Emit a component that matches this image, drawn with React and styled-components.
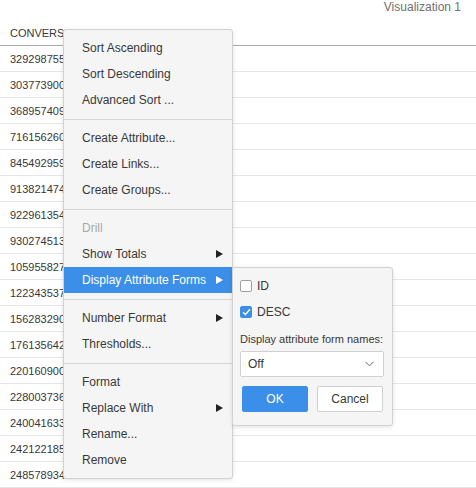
import React from "react";
import styled, { createGlobalStyle } from "styled-components";

const Global = createGlobalStyle`
  html, body { margin: 0; padding: 0; background: #fff; }
  body { font-family: "Liberation Sans", Arial, sans-serif; font-size: 12px; color: #383838; }
  * { box-sizing: border-box; }
`;

const Page = styled.div`
  position: relative;
  width: 476px;
  height: 488px;
  overflow: hidden;
  background: #fff;
`;

const TitleBar = styled.div`
  height: 20px;
  padding: 0 15px 0 0;
  display: flex;
  justify-content: flex-end;
  align-items: flex-start;
  line-height: 14px;
  color: #707070;
  font-size: 12px;
`;

const Table = styled.div`
  display: flex;
  flex-direction: column;
  font-size: 11px;
`;

const HeaderRow = styled.div`
  height: 26px;
  padding: 1px 10px 0;
  display: flex;
  align-items: center;
  border-bottom: 1px solid #a8a8a8;
  color: #383838;
`;

const Row = styled.div`
  height: 26px;
  padding: 0 10px;
  display: flex;
  align-items: center;
  border-bottom: 1px solid #e6e6e6;
  color: #383838;
`;

const Menu = styled.div`
  position: absolute;
  left: 63px;
  top: 29px;
  width: 170px;
  padding: 5px 0 5px;
  background: #f5f5f5;
  border: 1px solid #d2d2d2;
  border-radius: 3px;
  box-shadow: 0 1px 4px rgba(0, 0, 0, 0.12);
  display: flex;
  flex-direction: column;
`;

const Item = styled.div`
  height: 26px;
  padding: 0 9px 0 18px;
  display: flex;
  align-items: center;
  justify-content: space-between;
  color: ${(p) => (p.$active ? "#fff" : p.$disabled ? "#a9a9a9" : "#383838")};
  background: ${(p) => (p.$active ? "#3b8fe9" : "transparent")};
`;

const Arrow = styled.span`
  width: 0;
  height: 0;
  border-top: 4px solid transparent;
  border-bottom: 4px solid transparent;
  border-left: 7px solid ${(p) => (p.$light ? "#fff" : "#222")};
`;

const Sep = styled.div`
  height: 1px;
  background: #d6d6d6;
  margin: 6px 0 5px;
`;

const Sub = styled.div`
  position: absolute;
  left: 232px;
  top: 267px;
  width: 161px;
  height: 159px;
  padding: 5px 8px 0 7px;
  background: #f5f5f5;
  border: 1px solid #d2d2d2;
  border-radius: 3px;
  box-shadow: 0 1px 4px rgba(0, 0, 0, 0.12);
  display: flex;
  flex-direction: column;
`;

const CheckRow = styled.div`
  height: 26px;
  display: flex;
  align-items: center;
  gap: 5px;
  color: #383838;
`;

const Box = styled.span`
  width: 12px;
  height: 12px;
  border-radius: 2px;
  border: 1px solid ${(p) => (p.$checked ? "#3b8fe9" : "#a0a0a0")};
  background: ${(p) => (p.$checked ? "#3b8fe9" : "#fff")};
  display: flex;
  align-items: center;
  justify-content: center;
`;

const Label = styled.div`
  margin-top: 7px;
  line-height: 14px;
  font-size: 11px;
  color: #383838;
  white-space: nowrap;
`;

const Select = styled.div`
  margin-top: 5px;
  height: 26px;
  background: #fff;
  border: 1px solid #d0d0d0;
  border-radius: 2px;
  display: flex;
  align-items: center;
  justify-content: space-between;
  padding: 0 9px 0 7px;
  color: #383838;
`;

const Buttons = styled.div`
  margin-top: 9px;
  padding-left: 2px;
  display: flex;
  gap: 9px;
`;

const Button = styled.div`
  width: 66px;
  height: 26px;
  border-radius: 2px;
  display: flex;
  align-items: center;
  justify-content: center;
  font-size: 12px;
  background: ${(p) => (p.$primary ? "#3b8fe9" : "#fff")};
  color: ${(p) => (p.$primary ? "#fff" : "#383838")};
  border: 1px solid ${(p) => (p.$primary ? "#3b8fe9" : "#cfcfcf")};
`;

const rows = [
  "3292987551", "3037739004", "3689574092", "7161562601", "8454929593",
  "9138214748", "9229613540", "9302745131", "1059558276", "1223435379",
  "1562832904", "1761356421", "2201609005", "2280037362", "2400416338",
  "2421221857", "2485789346",
];

const groups = [
  [{ t: "Sort Ascending" }, { t: "Sort Descending" }, { t: "Advanced Sort ..." }],
  [{ t: "Create Attribute..." }, { t: "Create Links..." }, { t: "Create Groups..." }],
  [{ t: "Drill", disabled: true }, { t: "Show Totals", sub: true }, { t: "Display Attribute Forms", sub: true, active: true }],
  [{ t: "Number Format", sub: true }, { t: "Thresholds..." }],
  [{ t: "Format" }, { t: "Replace With", sub: true }, { t: "Rename..." }, { t: "Remove" }],
];

export default function App() {
  return (
    <Page>
      <Global />
      <TitleBar>Visualization 1</TitleBar>
      <Table>
        <HeaderRow>CONVERSATION_ID</HeaderRow>
        {rows.map((r) => (
          <Row key={r}>{r}</Row>
        ))}
      </Table>
      <Menu>
        {groups.map((g, gi) => (
          <React.Fragment key={gi}>
            {gi > 0 && <Sep />}
            {g.map((it) => (
              <Item key={it.t} $active={it.active} $disabled={it.disabled}>
                <span>{it.t}</span>
                {it.sub && <Arrow $light={it.active} />}
              </Item>
            ))}
          </React.Fragment>
        ))}
      </Menu>
      <Sub>
        <CheckRow>
          <Box />
          <span>ID</span>
        </CheckRow>
        <CheckRow>
          <Box $checked>
            <svg width="9" height="8" viewBox="0 0 9 8">
              <path d="M1 4.2 L3.4 6.5 L8 1.3" fill="none" stroke="#fff" strokeWidth="1.3" />
            </svg>
          </Box>
          <span>DESC</span>
        </CheckRow>
        <Label>Display attribute form names:</Label>
        <Select>
          <span>Off</span>
          <svg width="9" height="6" viewBox="0 0 9 6">
            <path d="M0.5 0.8 L4.5 4.8 L8.5 0.8" fill="none" stroke="#666" strokeWidth="1" />
          </svg>
        </Select>
        <Buttons>
          <Button $primary>OK</Button>
          <Button>Cancel</Button>
        </Buttons>
      </Sub>
    </Page>
  );
}
